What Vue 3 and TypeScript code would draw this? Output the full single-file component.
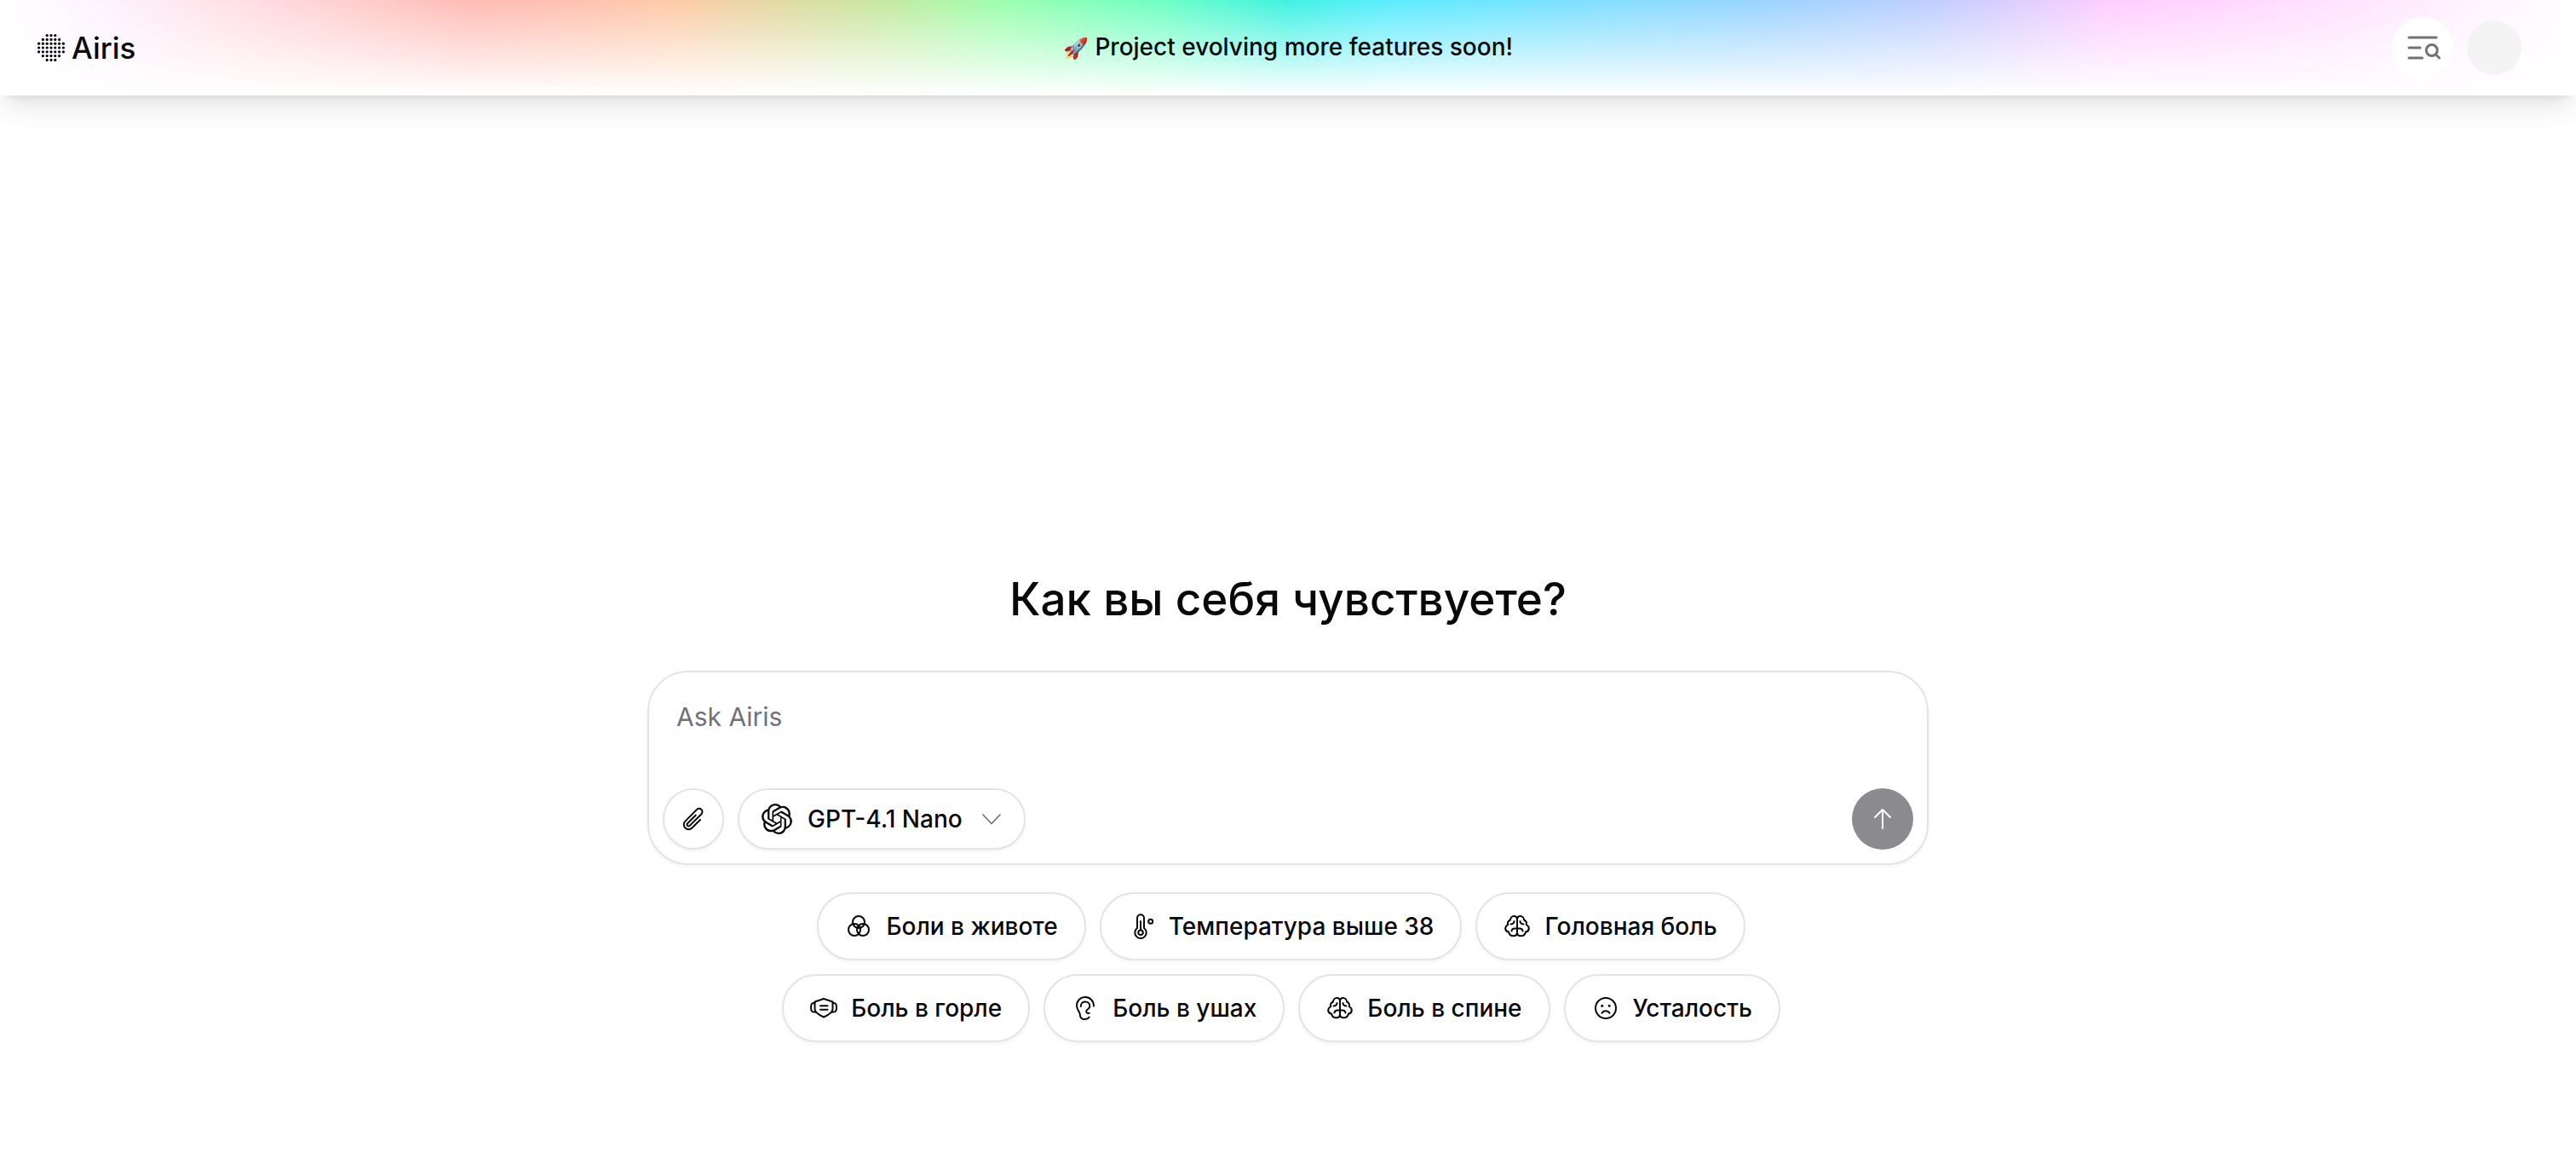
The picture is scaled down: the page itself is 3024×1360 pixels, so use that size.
<script setup lang="ts">
interface Complaint {
  label: string
  icon: 'circles' | 'thermometer' | 'brain' | 'mask' | 'ear' | 'sad'
}

const rows: Complaint[][] = [
  [
    { label: 'Боли в животе', icon: 'circles' },
    { label: 'Температура выше 38', icon: 'thermometer' },
    { label: 'Головная боль', icon: 'brain' },
  ],
  [
    { label: 'Боль в горле', icon: 'mask' },
    { label: 'Боль в ушах', icon: 'ear' },
    { label: 'Боль в спине', icon: 'brain' },
    { label: 'Усталость', icon: 'sad' },
  ],
]

// Half-width of every row of the round dot logo
const dotRows: number[] = [1, 2, 3, 3, 3, 2, 1]
const dots = dotRows.flatMap((half, row) =>
  Array.from({ length: half * 2 + 1 }, (_, i) => ({
    x: 16 + (i - half) * 4.8,
    y: 1.6 + row * 4.8,
  })),
)
</script>

<template>
  <div class="page">
    <header class="header">
      <a class="brand" href="#">
        <svg class="brand-mark" viewBox="0 0 32 32" aria-hidden="true">
          <circle v-for="(d, i) in dots" :key="i" :cx="d.x" :cy="d.y" r="1.6" />
        </svg>
        <span>Airis</span>
      </a>
      <p class="notice"><span class="rocket">🚀</span> Project evolving more features soon!</p>
      <div class="tools">
        <button class="round history" type="button" aria-label="Search chats">
          <svg width="48" height="48" viewBox="0 0 48 48" fill="none" stroke="#71717a" stroke-width="3" stroke-linecap="round">
            <path d="M8 12H40M8 24H21M8 36H23.5" />
            <circle cx="34.7" cy="27" r="6.5" />
            <path d="M39.5 32L43.5 36" />
          </svg>
        </button>
        <button class="avatar" type="button" aria-label="Account"></button>
      </div>
    </header>

    <main class="main">
      <h1 class="title">Как вы себя чувствуете?</h1>

      <form class="composer" @submit.prevent>
        <textarea class="prompt" rows="1" placeholder="Ask Airis" aria-label="Ask Airis"></textarea>
        <div class="actions">
          <button class="round outlined" type="button" aria-label="Attach file">
            <svg width="30" height="30" viewBox="0 0 24 24" fill="none" stroke="currentColor" stroke-width="1.6" stroke-linecap="round" stroke-linejoin="round">
              <path d="m18.375 12.739-7.693 7.693a4.5 4.5 0 0 1-6.364-6.364l10.94-10.94A3 3 0 1 1 19.5 7.372L8.552 18.32m.009-.01-.01.01m5.699-9.941-7.81 7.81a1.5 1.5 0 0 0 2.112 2.13" />
            </svg>
          </button>
          <button class="model" type="button">
            <svg width="36" height="36" viewBox="0 0 24 24" fill="currentColor" aria-hidden="true">
              <path d="M22.2819 9.8211a5.9847 5.9847 0 0 0-.5157-4.9108 6.0462 6.0462 0 0 0-6.5098-2.9A6.0651 6.0651 0 0 0 4.9807 4.1818a5.9847 5.9847 0 0 0-3.9977 2.9 6.0462 6.0462 0 0 0 .7427 7.0966 5.98 5.98 0 0 0 .511 4.9107 6.051 6.051 0 0 0 6.5146 2.9001A5.9847 5.9847 0 0 0 13.2599 24a6.0557 6.0557 0 0 0 5.7718-4.2058 5.9894 5.9894 0 0 0 3.9977-2.9001 6.0557 6.0557 0 0 0-.7475-7.0729zm-9.022 12.6081a4.4755 4.4755 0 0 1-2.8764-1.0408l.1419-.0804 4.7783-2.7582a.7948.7948 0 0 0 .3927-.6813v-6.7369l2.02 1.1686a.071.071 0 0 1 .038.052v5.5826a4.504 4.504 0 0 1-4.4945 4.4944zm-9.6607-4.1254a4.4708 4.4708 0 0 1-.5346-3.0137l.142.0852 4.783 2.7582a.7712.7712 0 0 0 .7806 0l5.8428-3.3685v2.3324a.0804.0804 0 0 1-.0332.0615L9.74 19.9502a4.4992 4.4992 0 0 1-6.1408-1.6464zM2.3408 7.8956a4.485 4.485 0 0 1 2.3655-1.9728V11.6a.7664.7664 0 0 0 .3879.6765l5.8144 3.3543-2.0201 1.1685a.0757.0757 0 0 1-.071 0l-4.8303-2.7865A4.504 4.504 0 0 1 2.3408 7.872zm16.5963 3.8558L13.1038 8.364 15.1192 7.2a.0757.0757 0 0 1 .071 0l4.8303 2.7913a4.4944 4.4944 0 0 1-.6765 8.1042v-5.6772a.79.79 0 0 0-.407-.667zm2.0107-3.0231l-.142-.0852-4.7735-2.7818a.7759.7759 0 0 0-.7854 0L9.409 9.2297V6.8974a.0662.0662 0 0 1 .0284-.0615l4.8303-2.7866a4.4992 4.4992 0 0 1 6.6802 4.66zM8.3065 12.863l-2.02-1.1638a.0804.0804 0 0 1-.038-.0567V6.0742a4.4992 4.4992 0 0 1 7.3757-3.4537l-.142.0805L8.704 5.459a.7948.7948 0 0 0-.3927.6813zm1.0976-2.3654l2.602-1.4998 2.6069 1.4998v2.9994l-2.5974 1.4997-2.6067-1.4997Z" />
            </svg>
            <span>GPT-4.1 Nano</span>
            <svg class="chevron" width="24" height="24" viewBox="0 0 24 24" fill="none" stroke="currentColor" stroke-width="1.7" stroke-linecap="round" stroke-linejoin="round" aria-hidden="true">
              <path d="M2 7L12 17.5L22 7" />
            </svg>
          </button>
          <button class="round send" type="submit" aria-label="Send">
            <svg width="24" height="28" viewBox="0 0 24 28" fill="none" stroke="currentColor" stroke-width="2" stroke-linecap="round" stroke-linejoin="round">
              <path d="M12 25V3M3 12L12 3L21 12" />
            </svg>
          </button>
        </div>
      </form>

      <div class="suggestions">
        <div v-for="(row, r) in rows" :key="r" class="row">
          <button v-for="item in row" :key="item.label" class="chip" type="button">
            <svg class="chip-icon" viewBox="0 0 32 32" fill="none" stroke="currentColor" stroke-width="2" stroke-linecap="round" stroke-linejoin="round" aria-hidden="true">
              <template v-if="item.icon === 'circles'">
                <circle cx="16" cy="11" r="7" />
                <circle cx="11" cy="20" r="7" />
                <circle cx="21" cy="20" r="7" />
              </template>
              <template v-else-if="item.icon === 'thermometer'">
                <path d="M11 18V6.3a4 4 0 0 1 8 0V18a6.7 6.7 0 1 1-8 0Z" />
                <path d="M15 10V20" />
                <circle cx="15" cy="23.3" r="2.8" />
                <circle cx="26.7" cy="10.3" r="2.5" />
              </template>
              <template v-else-if="item.icon === 'brain'">
                <path d="M16 8C16 5.5 14.5 4 12.3 4C9.8 4 8 6 8 8.5C5.5 9.3 4.3 11.8 5.3 14C3 15.3 2 17 2.2 19C2.5 21 4 22.3 6 22.5C6.5 25.5 9 27.3 11.8 27.3C14.5 27.3 16 25.5 16 23V8" />
                <path d="M16 8C16 5.5 17.5 4 19.7 4C22.2 4 24 6 24 8.5C26.5 9.3 27.7 11.8 26.7 14C29 15.3 30 17 29.8 19C29.5 21 28 22.3 26 22.5C25.5 25.5 23 27.3 20.2 27.3C17.5 27.3 16 25.5 16 23" />
                <path d="M12.5 10C12.5 12 11 13.2 8.5 13.5M19.5 10C19.5 12 21 13.2 23.5 13.5M16 18.5H13C11 18.5 9.7 19.5 9.5 21.5M16 18.5H19C21 18.5 22.3 19.5 22.5 21.5" />
              </template>
              <template v-else-if="item.icon === 'mask'">
                <path d="M16 5L26.5 8.5V17C26.5 21.5 20.5 24.5 16 26.5C11.5 24.5 5.5 21.5 5.5 17V8.5Z" />
                <path d="M5.5 10H4C2 10 1 12 1 15S2 20.5 4 20.5H6.5M26.5 10H28C30 10 31 12 31 15S30 20.5 28 20.5H25.5M12 13.3H20.5M12 17.7H20.5" />
              </template>
              <template v-else-if="item.icon === 'ear'">
                <path d="M26 13.5C26 7.5 21.5 3 16 3C10 3 6 7.5 6 13C6 18.5 9.7 19.5 9.8 23.5C9.9 27 12 29 15 29C17.5 29 19.5 28.3 20.7 26.5" />
                <path d="M10.7 14C10.7 10.5 13 8.5 16 8.5C19.2 8.5 21.3 10.8 21.3 13.7C21.3 16.5 18.5 16.8 17.5 18.8C16.6 20.8 18.3 22.6 20.7 21.8" />
              </template>
              <template v-else>
                <circle cx="16" cy="16" r="12" />
                <path d="M11.5 21.8C13.5 18.3 18.5 18.3 20.5 21.8" />
                <path d="M11.7 13.3H11.8M20.2 13.3H20.3" stroke-width="3" />
              </template>
            </svg>
            <span>{{ item.label }}</span>
          </button>
        </div>
      </div>
    </main>
  </div>
</template>

<style>
body {
  margin: 0;
  background: #fff;
}
</style>

<style scoped>
.page {
  min-height: 100vh;
  display: flex;
  flex-direction: column;
  font-family: Inter, "Liberation Sans", sans-serif;
  color: #09090b;
}

button {
  font: inherit;
  color: inherit;
  padding: 0;
  border: 0;
  background: none;
  cursor: pointer;
}

svg {
  display: block;
  flex: none;
}

.header {
  display: grid;
  grid-template-columns: 1fr auto 1fr;
  align-items: center;
  height: 112px;
  padding: 0 44px;
  box-sizing: border-box;
  background:
    linear-gradient(to bottom, rgba(255, 255, 255, 0), #fff),
    linear-gradient(to right, #fff 0%, #fdf3ff 4%, #ffe0e6 9%, #ffbcb6 18%, #ffbfb2 21%, #ffcaa8 26%, #c8e8a0 34%, #9cffae 39%, #70ffc4 45%, #40f2e2 50%, #5cecff 54%, #82deff 62%, #98d4ff 68%, #c0ceff 75%, #ffceff 82%, #ffd6ff 86%, #ffeaff 93%, #fff 100%);
  box-shadow: 0 20px 30px -6px rgba(0, 0, 0, 0.1), 0 8px 12px -8px rgba(0, 0, 0, 0.1);
}

.brand {
  display: flex;
  align-items: center;
  gap: 8px;
  color: inherit;
  text-decoration: none;
  font-size: 35px;
  font-weight: 500;
  line-height: 48px;
}

.brand-mark {
  width: 32px;
  height: 32px;
}

.notice {
  margin: 0;
  font-size: 28px;
  font-weight: 500;
  line-height: 40px;
}

.rocket {
  font-size: 24px;
}

.tools {
  display: flex;
  align-items: center;
  justify-content: flex-end;
  gap: 16px;
  padding-right: 20px;
}

.round {
  display: flex;
  align-items: center;
  justify-content: center;
  width: 72px;
  height: 72px;
  border-radius: 50%;
  box-sizing: border-box;
}

.history {
  background: #fff;
}

.avatar {
  width: 64px;
  height: 64px;
  border-radius: 50%;
  background: #f4f4f4;
}

.main {
  flex: 1;
  display: flex;
  flex-direction: column;
  align-items: center;
  justify-content: flex-end;
  padding: 0 32px 137px;
}

.title {
  margin: 0 0 48px;
  font-size: 53px;
  font-weight: 500;
  line-height: 72px;
}

.composer {
  display: flex;
  flex-direction: column;
  gap: 58px;
  width: 100%;
  max-width: 1504px;
  box-sizing: border-box;
  padding: 30px 16px 16px;
  border: 2px solid #e4e4e7;
  border-radius: 48px;
  background: #fff;
  box-shadow: 0 2px 4px rgba(0, 0, 0, 0.05);
}

.prompt {
  display: block;
  height: 48px;
  padding: 0 16px;
  border: 0;
  outline: 0;
  resize: none;
  overflow: hidden;
  background: none;
  font: inherit;
  font-size: 30px;
  line-height: 44px;
}

.prompt::placeholder {
  color: #71717a;
  opacity: 1;
}

.actions {
  display: flex;
  gap: 16px;
}

.outlined,
.model,
.chip {
  border: 2px solid #e4e4e7;
  background: #fff;
  box-shadow: 0 2px 4px rgba(0, 0, 0, 0.05);
}

.model {
  display: flex;
  align-items: center;
  gap: 18px;
  height: 72px;
  padding: 0 26px;
  border-radius: 36px;
  font-size: 28px;
  font-weight: 500;
}

.chevron {
  color: #71717a;
  margin-left: 4px;
}

.send {
  margin-left: auto;
  background: #8b8a8f;
  color: #fff;
}

.suggestions {
  display: flex;
  flex-direction: column;
  gap: 16px;
  margin-top: 32px;
  padding-right: 16px;
}

.row {
  display: flex;
  justify-content: center;
  gap: 16px;
}

.chip {
  display: flex;
  align-items: center;
  gap: 16px;
  height: 80px;
  padding: 0 31px;
  border-radius: 40px;
  font-size: 28px;
  font-weight: 500;
  white-space: nowrap;
}

.chip-icon {
  width: 32px;
  height: 32px;
}
</style>
